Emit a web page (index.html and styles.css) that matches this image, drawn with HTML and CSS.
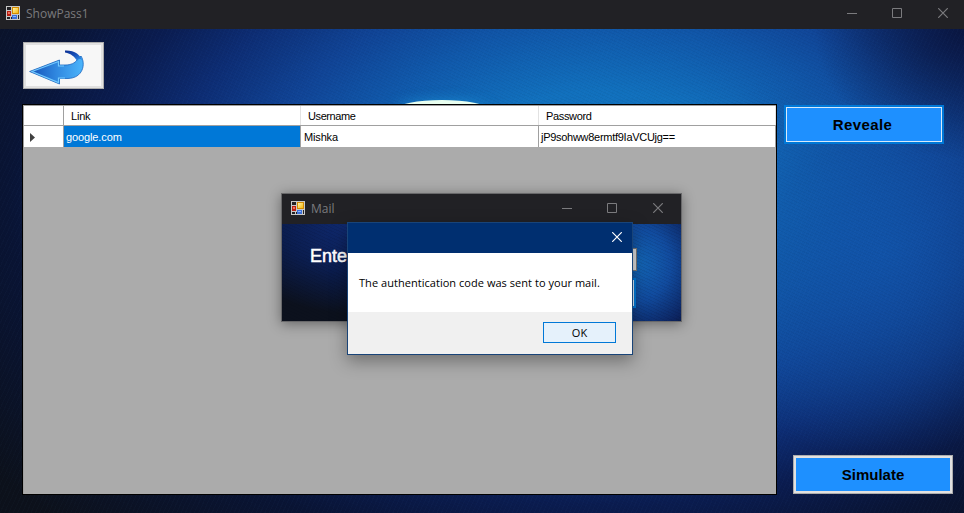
FILE: index.html
```
<!DOCTYPE html>
<html lang="en">
<head>
<meta charset="utf-8">
<title>ShowPass1</title>
<link rel="stylesheet" href="styles.css">
</head>
<body>
<svg class="defs" width="0" height="0" aria-hidden="true">
  <defs>
    <linearGradient id="gold" x1="0" y1="0" x2="1" y2="1"><stop offset="0" stop-color="#fff3a8"/><stop offset="1" stop-color="#f5b80c"/></linearGradient>
    <linearGradient id="arrow" x1="0" y1="0" x2="1" y2="0"><stop offset="0" stop-color="#1450b8"/><stop offset=".5" stop-color="#3088e0"/><stop offset="1" stop-color="#4cb5fb"/></linearGradient>
    <linearGradient id="tail" x1="0" y1="0" x2="1" y2="1"><stop offset="0" stop-color="#0b2f92"/><stop offset=".5" stop-color="#174fb8"/><stop offset="1" stop-color="#37a0f4"/></linearGradient>
    <symbol id="form-icon" viewBox="0 0 14 14">
      <path fill="#c8c8c8" d="M0 0h14v14H0z"/>
      <path fill="#222226" d="M1 1h4v3H1zM1 11h3v2H1zM5 11h1v2H5zM12 9h1v4h-1z"/>
      <path fill="#b71f12" d="M1 5h4v5H1z"/><path fill="#f0705c" d="M2 6h2v2H2z"/>
      <path fill="#d28a00" d="M6 1h7v7H6z"/><path fill="url(#gold)" d="M7 2h5v5H7z"/>
      <path fill="#3c70d8" d="M6 9h5v4H6z"/><path fill="#8fb6f8" d="M7 10h3v1H7z"/>
    </symbol>
    <symbol id="min" viewBox="0 0 10 10"><path fill="none" stroke="currentColor" d="M0 5.5h10"/></symbol>
    <symbol id="max" viewBox="0 0 10 10"><path fill="none" stroke="currentColor" d="M.5.5h9v9h-9z"/></symbol>
    <symbol id="close" viewBox="0 0 10 10"><path fill="none" stroke="currentColor" stroke-width="1.2" d="M.2.2l9.6 9.6M9.8.2L.2 9.8"/></symbol>
  </defs>
</svg>
<div class="window">
  <header class="titlebar">
    <svg class="app-icon"><use href="#form-icon"/></svg>
    <span class="title">ShowPass1</span>
    <div class="controls">
      <svg><use href="#min"/></svg><svg><use href="#max"/></svg><svg><use href="#close"/></svg>
    </div>
  </header>
  <main class="content">
    <div class="glow"></div>
    <section class="left">
      <button class="back" aria-label="Back">
        <svg width="55" height="35" viewBox="0 0 55 35">
          <path fill="url(#arrow)" stroke="#1763be" stroke-width=".8" d="M.6 21.500L30.500 10V15H36C42 15 46 13 48 10L52 6C57 14 54 28 39 28.500H30.500V34z"/>
          <path fill="url(#tail)" d="M36 .5C45 0 52 5 53.500 11C51.500 8 49.500 8.500 48 11C46 7 42 3.500 36 2.500z"/>
          <path fill="none" stroke="#74cbff" stroke-width="1.200" d="M36 28H29.500V32.500L3 21.500L29.500 11.500V16H35"/>
        </svg>
      </button>
      <div class="grid">
        <div class="row head"><div class="cell"></div><div class="cell">Link</div><div class="cell user">Username</div><div class="cell pass">Password</div></div>
        <div class="row"><div class="cell marker"><svg width="5" height="9" viewBox="0 0 5 9"><path fill="#404040" d="M0 0l5 4.500L0 9z"/></svg></div><div class="cell selected">google.com</div><div class="cell name">Mishka</div><div class="cell hash">jP9sohww8ermtf9IaVCUjg==</div></div>
      </div>
    </section>
    <aside class="actions">
      <button class="action focused"><span>Reveale</span></button>
      <button class="action"><span>Simulate</span></button>
    </aside>
  </main>
</div>
<div class="mail">
  <header class="titlebar small">
    <svg class="app-icon"><use href="#form-icon"/></svg>
    <span class="title">Mail</span>
    <div class="controls">
      <svg><use href="#min"/></svg><svg><use href="#max"/></svg><svg><use href="#close"/></svg>
    </div>
  </header>
  <div class="mail-body">
    <span class="prompt">Ente</span>
    <div class="fields"><div class="field"></div><div class="submit"></div></div>
  </div>
</div>
<div class="dialog">
  <header class="dialog-bar"><svg><use href="#close"/></svg></header>
  <p class="message">The authentication code was sent to your mail.</p>
  <footer class="dialog-foot"><button class="ok">OK</button></footer>
</div>
</body>
</html>
```
FILE: styles.css
```
* { box-sizing: border-box; }
body { margin: 0; width: 964px; height: 513px; overflow: hidden; position: relative; font-family: "Liberation Sans", sans-serif; }
button { padding: 0; border: 0; border-radius: 0; font: inherit; }
svg { display: block; flex: none; }
.defs { position: absolute; }
.window { height: 513px; display: flex; flex-direction: column; }
.titlebar { height: 29px; flex: none; display: flex; align-items: center; background: #212125; color: #7b7b7e; padding: 0 16px 3px 6px; }
.app-icon { width: 14px; height: 14px; }
.title { font: 12px "Open Sans", sans-serif; margin-left: 6px; }
.controls { margin-left: auto; display: flex; gap: 35px; }
.controls svg { width: 10px; height: 10px; }
.controls svg:nth-child(2) { margin-right: 1px; }
.content {
  position: relative; flex: 1; display: flex; padding: 13px 11px 18px 22px; gap: 7px;
  background:
    repeating-linear-gradient(25deg, rgba(0,0,20,.04) 0 1px, transparent 1px 3px),
    repeating-linear-gradient(115deg, rgba(120,180,255,.02) 0 1px, transparent 1px 4px),
    radial-gradient(ellipse 150px 130px at 100% 0, rgba(9,20,60,.9), transparent),
    radial-gradient(ellipse 210px 210px at 880px 220px, rgba(17,84,170,.8), rgba(17,78,160,.5) 50%, transparent),
    radial-gradient(ellipse 560px 350px at 600px 160px, #1378c2 0%, #1170bd 28%, #1058aa 46%, #104496 60%, #0d2d74 76%, #0a1c50 90%, #091434 106%, #0c111b 135%);
}
.glow { position: absolute; left: 397px; top: 71px; width: 90px; height: 18px; border-radius: 50%; background: #e9fff0; box-shadow: 0 0 12px 1px rgba(29,143,212,.6); }
.left { position: relative; width: 755px; display: flex; flex-direction: column; gap: 15px; }
.back { width: 81px; height: 47px; margin-left: 1px; border: 1px solid #adadad; box-shadow: inset 0 0 0 2px #e1e1e1; background: #f7f7f7; display: flex; align-items: flex-start; padding: 7px 0 0 5px; }
.grid { flex: 1; background: #ababab; border: 1px solid #000; padding: 1px 0 0 1px; box-shadow: inset 1px 1px #a0a0a0; font-size: 11px; color: #000; }
.row { display: grid; grid-template-columns: 40px 237px 238px 237px; height: 21px; background: #fff; width: 752px; }
.row.head { height: 20px; border-bottom: 1px solid #a0a0a0; }
.cell { border-right: 1px solid #a0a0a0; padding: 5px 0 0 2px; line-height: 13px; white-space: nowrap; }
.head .cell { padding: 4px 0 0 7px; border-right-color: #e2e2e2; letter-spacing: -.2px; }
.head .user { letter-spacing: -.4px; }
.head .cell:first-child { border-right-color: #a0a0a0; }
.head .pass { letter-spacing: -.35px; }
.cell.marker { padding: 7px 0 0 6px; }
.selected { background: #0078d7; color: #fff; letter-spacing: -.12px; }
.cell.name { padding-left: 3px; letter-spacing: -.15px; }
.hash { letter-spacing: -.28px; }
.actions { width: 169px; display: flex; flex-direction: column; justify-content: space-between; padding: 63px 0 1px; }
.action { width: 160px; height: 39px; background: #1e90ff; border: 1px solid #adadad; box-shadow: inset 0 0 0 2px #e1e1e1; font-weight: bold; font-size: 15px; color: #000; }
.action:last-child { align-self: flex-end; }
.focused { border: 2px solid #0078d7; box-shadow: inset 0 0 0 1px #d9eaf9; letter-spacing: .4px; }
.focused span { margin-right: 3px; }
.action span { display: block; }
.mail { position: absolute; left: 281px; top: 193px; width: 401px; height: 129px; border: 1px solid #68686a; box-shadow: 0 2px 12px rgba(0,0,0,.4); }
.small { height: 30px; padding: 0 18px 2px 9px; }
.mail-body { height: 97px; display: flex; justify-content: space-between; padding: 20px 44px 0 28px;
  background:
    repeating-linear-gradient(25deg, rgba(0,0,20,.08) 0 1px, transparent 1px 3px),
    radial-gradient(ellipse 75px 80px at 355px 40px, #1366b6, #114b9e 45%, #0c2460 85%, transparent 115%),
    radial-gradient(ellipse 150px 90px at 80px 0, #102c76, #0b1d4e 55%, #0c111d); }
.prompt { font: 18px/24px "Liberation Sans", sans-serif; -webkit-text-stroke: .5px #fff; color: #fff; }
.fields { width: 20px; padding-top: 4px; }
.field { height: 23px; background: #d9d9d9; border: 1px solid #777; }
.submit { width: 19px; height: 30px; margin-top: 7px; background: #1e90ff; border: 2px solid #0078d7; box-shadow: inset 0 0 0 1px #d9eaf9; }
.dialog { position: absolute; left: 347px; top: 222px; width: 286px; height: 133px; border: 1px solid #194478; background: #fff; box-shadow: 0 6px 16px rgba(0,0,0,.35); }
.dialog-bar { height: 30px; background: #002f70; color: #fff; display: flex; justify-content: flex-end; align-items: center; padding: 0 10px 2px 0; }
.dialog-bar svg { width: 10px; height: 10px; }
.message { margin: 0; height: 59px; padding: 22px 0 0 11px; font: 11px/16px "Open Sans", sans-serif; letter-spacing: .04px; color: #000; white-space: nowrap; }
.dialog-foot { height: 42px; background: #f0f0f0; display: flex; justify-content: flex-end; padding: 10px 16px 0 0; }
.ok { width: 73px; height: 21px; background: #e5f1fb; border: 1px solid #0078d7; font: 11px "Open Sans", sans-serif; color: #000; }
```
